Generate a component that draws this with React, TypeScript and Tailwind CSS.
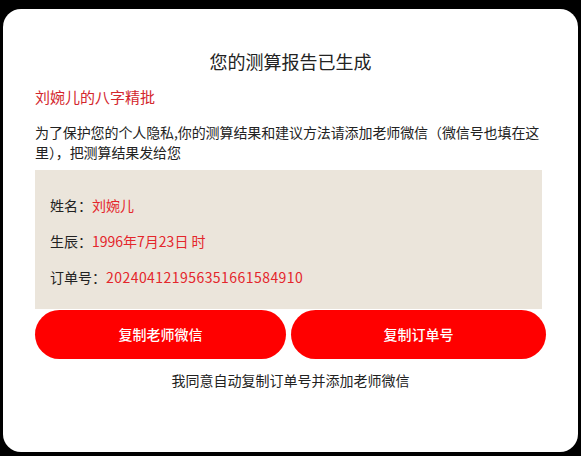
export default function App() {
  const rows = [
    { label: '姓名：', value: '刘婉儿', extra: '' },
    { label: '生辰：', value: '1996年7月23日 时', extra: '' },
    { label: '订单号：', value: '202404121956351661584910', extra: 'tracking-[0.45px]' },
  ]

  return (
    <div
      className="min-h-screen bg-black pt-[9px] pl-[3px]"
      style={{ fontFamily: '"Noto Sans CJK SC", "Noto Sans", sans-serif' }}
    >
      <div className="w-[575px] h-[443px] bg-white rounded-[18px] pt-[39px] pl-[32px] text-[#222]">
        <h2 className="w-[511px] text-center text-[18px] leading-[26px] font-normal">您的测算报告已生成</h2>
        <div className="mt-[12px] text-[15px] leading-[22px] text-[#d3262d]">刘婉儿的八字精批</div>
        <p className="mt-[14px] w-[510px] text-[14px] leading-[20px] tracking-[-0.1px]">
          为了保护您的个人隐私,你的测算结果和建议方法请添加老师微信（微信号也填在这里），把测算结果发给您
        </p>
        <div className="mt-[8px] w-[507px] h-[139px] bg-[#ebe5db] pt-[25px] pl-[15px] flex flex-col gap-[16px]">
          {rows.map((r) => (
            <div key={r.label} className="text-[14px] leading-[20px]">
              {r.label}
              <span className={`text-[#e4262b] ${r.extra}`}>{r.value}</span>
            </div>
          ))}
        </div>
        <div className="mt-[1px] flex gap-[5px]">
          <button className="w-[251px] h-[49px] rounded-full bg-[#ff0000] text-white text-[14px] font-medium">
            复制老师微信
          </button>
          <button className="w-[255px] h-[49px] rounded-full bg-[#ff0000] text-white text-[14px] font-medium">
            复制订单号
          </button>
        </div>
        <div className="mt-[11px] w-[511px] text-center text-[14px] leading-[20px]">我同意自动复制订单号并添加老师微信</div>
      </div>
    </div>
  )
}
